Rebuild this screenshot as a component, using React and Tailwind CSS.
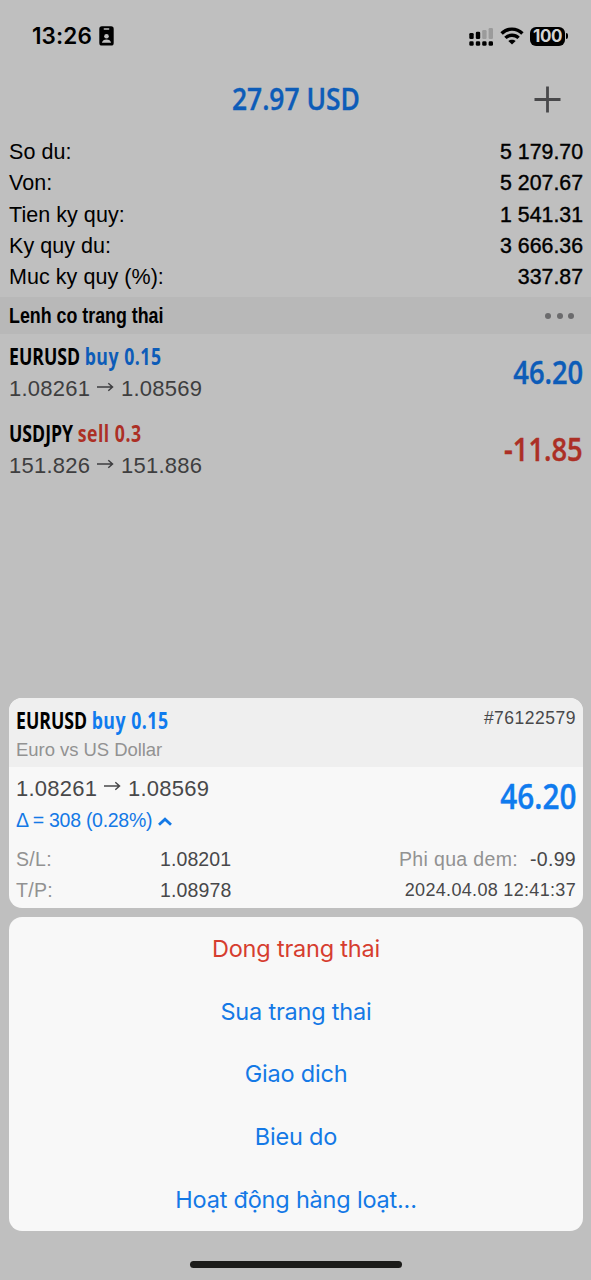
import React from 'react';

const SUMMARY = [
  { label: 'So du:', value: '5 179.70' },
  { label: 'Von:', value: '5 207.67' },
  { label: 'Tien ky quy:', value: '1 541.31' },
  { label: 'Ky quy du:', value: '3 666.36' },
  { label: 'Muc ky quy (%):', value: '337.87' },
];

const POSITIONS = [
  { symbol: 'EURUSD', side: 'buy', volume: '0.15', open: '1.08261', current: '1.08569', profit: '46.20' },
  { symbol: 'USDJPY', side: 'sell', volume: '0.3', open: '151.826', current: '151.886', profit: '-11.85' },
];

const ACTIONS = [
  { label: 'Dong trang thai', danger: true },
  { label: 'Sua trang thai' },
  { label: 'Giao dich' },
  { label: 'Bieu do' },
  { label: 'Hoạt động hàng loạt...' },
];

function SignalIcon() {
  return (
    <svg width="25" height="19" viewBox="0 0 25 19">
      <rect x="0.3" y="6" width="4.4" height="6" rx="1.3" />
      <rect x="6.8" y="4.8" width="4.4" height="7.2" rx="1.3" />
      <rect x="13.2" y="3" width="4.4" height="9" rx="1.3" fill="#9b9b9b" />
      <rect x="19.6" y="1" width="4.4" height="11" rx="1.3" fill="#9b9b9b" />
      {[0.3, 6.8, 13.2, 19.6].map((x) => (
        <rect key={x} x={x} y="14.3" width="4.4" height="4.5" rx="1.4" />
      ))}
    </svg>
  );
}

function WifiIcon() {
  return (
    <svg width="24" height="18" viewBox="0 0 24 18" fill="none" stroke="#000" strokeWidth="3.4">
      <path d="M1.6 6.5C7.4.6 16.6.6 22.4 6.5" />
      <path d="M5.4 10.9c3.7-3.6 9.5-3.6 13.2 0" />
      <path d="M12 17.6l-3.7-3.6c2-1.7 5.4-1.7 7.4 0z" fill="#000" stroke="none" />
    </svg>
  );
}

function StatusBar() {
  return (
    <div className="flex h-[72px] items-center justify-between pl-8 pr-[23px]">
      <div className="flex items-center gap-[7px]">
        <span className="w-[60px] whitespace-nowrap font-['Inter'] text-[22.5px] font-semibold tracking-[0.1px]">
          13:26
        </span>
        <svg width="15" height="20" viewBox="0 0 15 20">
          <rect x="0.3" y="0.3" width="14.4" height="19.2" rx="2.6" />
          <rect x="4.6" y="2.2" width="5.8" height="1.5" rx="0.7" fill="#bfbfbf" />
          <circle cx="7.5" cy="10.3" r="2.3" fill="#bfbfbf" />
          <path d="M2.9 16.8c.4-2.3 2.1-3.4 4.6-3.4s4.2 1.1 4.6 3.4z" fill="#bfbfbf" />
        </svg>
      </div>
      <div className="flex items-center">
        <div className="mr-[6px]">
          <SignalIcon />
        </div>
        <WifiIcon />
        <div className="ml-[6px] flex h-[19px] w-[35px] items-center justify-center rounded-[6px] bg-black pt-[1px] font-['Inter'] text-[17px] font-bold tracking-[-0.4px] text-[#d4d4d4]">
          100
        </div>
        <div className="ml-px h-[6px] w-[2px] rounded-r-full bg-black" />
      </div>
    </div>
  );
}

function Arrow() {
  return (
    <svg width="17" height="10" viewBox="0 0 17 10" fill="none" stroke="currentColor" strokeWidth="1.5">
      <path d="M0 5h15M11.3 1.3L15.5 5l-4.2 3.7" />
    </svg>
  );
}

function Prices({ open, current }) {
  return (
    <div className="flex h-[32px] items-center text-[22px] tracking-[0.25px]">
      <span className="w-[81px]">{open}</span>
      <span className="mb-[4px] mx-[7px]">
        <Arrow />
      </span>
      <span>{current}</span>
    </div>
  );
}

function Title({ symbol, side, volume, sideColor }) {
  return (
    <div className="h-[32px] origin-left scale-x-[0.785] whitespace-nowrap font-['Open_Sans'] text-[22.5px] font-bold leading-[32px] text-black">
      {symbol} <span className={`tracking-[0.65px] ${sideColor}`}>{side} {volume}</span>
    </div>
  );
}

function PositionRow({ position }) {
  const color = position.side === 'buy' ? 'text-[#0d5cb8]' : 'text-[#ac2f25]';
  return (
    <div className="flex h-[77px] items-center justify-between pl-[9px] pr-2">
      <div className="text-[#3e3e40]">
        <Title {...position} sideColor={color} />
        <Prices open={position.open} current={position.current} />
      </div>
      <div className={`mt-[-2px] origin-right scale-x-[0.84] font-['Open_Sans'] text-[32.5px] font-semibold leading-[40px] [-webkit-text-stroke:0.4px_currentColor] ${color}`}>
        {position.profit}
      </div>
    </div>
  );
}

function DetailCard() {
  return (
    <section className="h-[210px] overflow-hidden rounded-[13px] bg-[#f8f8f8] text-[#48484a]">
      <header className="flex h-[69px] justify-between bg-[#efefef] px-[7px]">
        <div className="pt-[7px]">
          <Title symbol="EURUSD" side="buy" volume="0.15" sideColor="text-[#0f7bee]" />
          <div className="text-[18.5px] leading-[26px] tracking-[-0.05px] text-[#929292]">Euro vs US Dollar</div>
        </div>
        <div className="pt-[8px] text-[17.5px] leading-[24px] tracking-[0.5px]">#76122579</div>
      </header>
      <div className="flex justify-between px-[7px]">
        <div className="pt-[5px]">
          <Prices open="1.08261" current="1.08569" />
          <div className="flex h-[34px] items-center gap-[6px] text-[19.5px] tracking-[-0.28px] text-[#1479e6]">
            <span>Δ = 308 (0.28%)</span>
            <svg width="14" height="9" viewBox="0 0 14 9" fill="none" stroke="currentColor" strokeWidth="2.8">
              <path d="M1 7.8l6-5.6 6 5.6" />
            </svg>
          </div>
        </div>
        <div className="origin-right scale-x-[0.86] pt-[8px] font-['Open_Sans'] text-[34.5px] font-semibold leading-[42px] text-[#0f7bee] [-webkit-text-stroke:0.4px_currentColor]">
          46.20
        </div>
      </div>
      <div className="flex h-[31px] items-center px-[7px] pt-[13px] text-[19.5px]">
        <span className="w-[144px] tracking-[0.3px] text-[#929292]">S/L:</span>
        <span className="tracking-[0.1px]">1.08201</span>
        <span className="ml-auto mr-3 tracking-[0.35px] text-[#929292]">Phi qua dem:</span>
        <span className="tracking-[0.3px]">-0.99</span>
      </div>
      <div className="flex h-[32px] items-center px-[7px] pt-[11px] text-[19.5px]">
        <span className="w-[144px] tracking-[0.3px] text-[#929292]">T/P:</span>
        <span className="tracking-[0.15px]">1.08978</span>
        <span className="ml-auto text-[18px] tracking-[0.32px]">2024.04.08 12:41:37</span>
      </div>
    </section>
  );
}

function ActionMenu() {
  return (
    <section className="flex h-[314px] flex-col rounded-[13px] bg-[#f8f8f8]">
      {ACTIONS.map(({ label, danger }) => (
        <button
          key={label}
          className={`flex-1 font-['Inter'] text-[23.5px] tracking-[-0.2px] ${
            danger ? 'text-[#d63d2f]' : 'text-[#1479e6]'
          }`}
        >
          {label}
        </button>
      ))}
    </section>
  );
}

export default function App() {
  return (
    <div className="flex h-[1280px] w-full flex-col overflow-hidden bg-[#bfbfbf] font-['Liberation_Sans',sans-serif] text-black">
      <StatusBar />

      {/* Floating profit */}
      <div className="grid h-[63px] grid-cols-[1fr_auto_1fr] items-center pb-[9px]">
        <div />
        <h1 className="scale-x-[0.865] font-['Open_Sans'] text-[30.5px] font-semibold text-[#0d5cb8] [-webkit-text-stroke:0.4px_currentColor]">
          27.97 USD
        </h1>
        <svg className="mr-[30px] justify-self-end" width="27" height="27" viewBox="0 0 27 27" stroke="#48484a" strokeWidth="2.8">
          <path d="M13.5.5v26M.5 13.5h26" />
        </svg>
      </div>

      {/* Account summary */}
      <div className="flex h-[162px] flex-col pb-[4px] pt-px">
        {SUMMARY.map(({ label, value }) => (
          <div key={label} className="flex flex-1 items-center justify-between pl-[9px] pr-2 leading-[28px]">
            <span className="text-[21.5px] tracking-[0.05px]">{label}</span>
            <span className="text-[21.3px] [-webkit-text-stroke:0.4px_black]">{value}</span>
          </div>
        ))}
      </div>

      <div className="flex h-[37px] items-center justify-between bg-[#b8b8b8] pl-[9px] pr-[17px]">
        <h2 className="origin-left scale-x-[0.81] whitespace-nowrap text-[22px] font-bold">Lenh co trang thai</h2>
        <div className="flex gap-[5.5px]">
          <i className="size-[6px] rounded-full bg-[#6b6b6d]" />
          <i className="size-[6px] rounded-full bg-[#6b6b6d]" />
          <i className="size-[6px] rounded-full bg-[#6b6b6d]" />
        </div>
      </div>

      {POSITIONS.map((position) => (
        <PositionRow key={position.symbol} position={position} />
      ))}

      {/* Bottom sheet */}
      <div className="mt-auto flex flex-col gap-[9px] pl-[9px] pr-2">
        <DetailCard />
        <ActionMenu />
      </div>
      <div className="flex h-[49px] shrink-0 justify-center pt-[30px]">
        <div className="h-[7px] w-[212px] rounded-full bg-[#1c1c1a]" />
      </div>
    </div>
  );
}
